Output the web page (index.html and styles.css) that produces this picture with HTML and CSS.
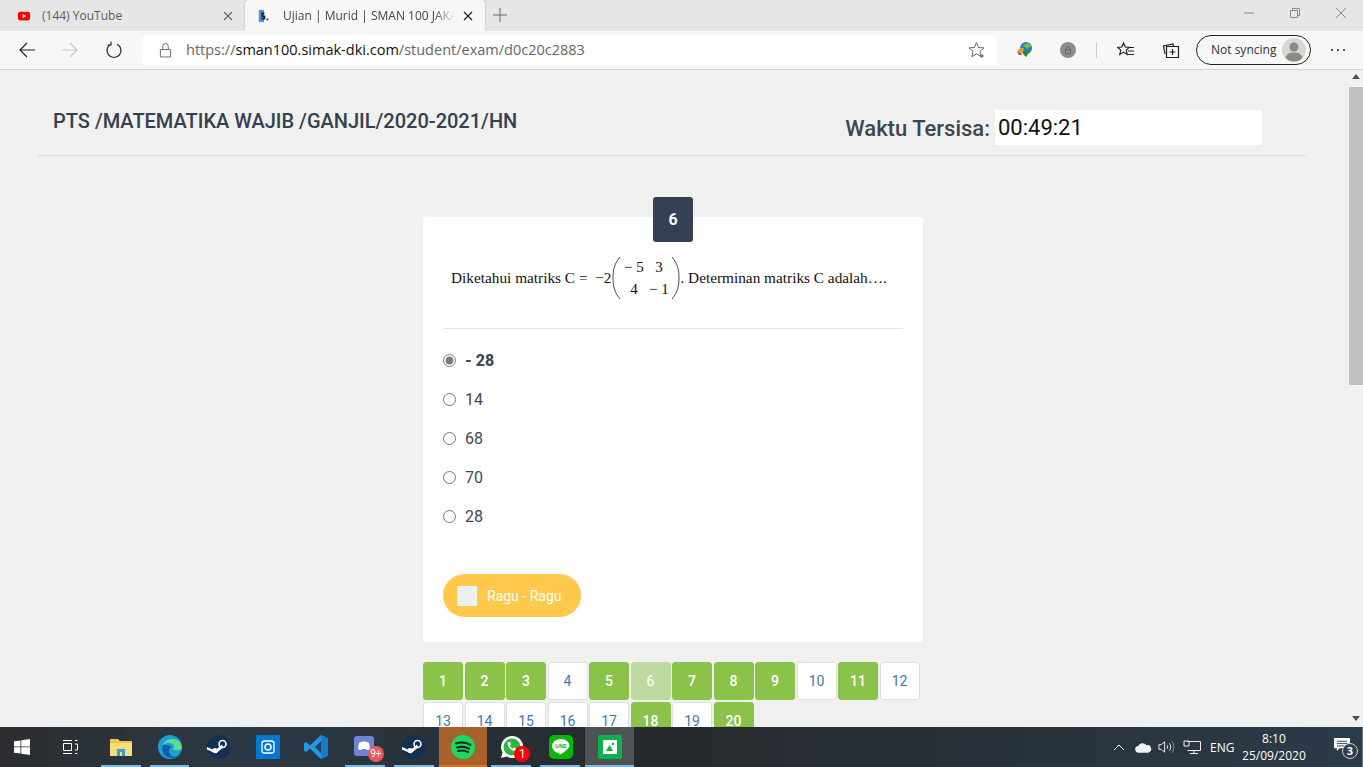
FILE: index.html
```html
<!DOCTYPE html>
<html lang="id">
<head>
<meta charset="utf-8">
<title>Ujian | Murid | SMAN 100 JAKARTA</title>
<link rel="stylesheet" href="styles.css">
</head>
<body>
<div class="tabstrip">
  <div class="tab">
    <svg class="fav" viewBox="0 0 16 16"><rect x="1" y="3" width="14" height="10" rx="3" fill="#f00"/><path d="M6.5 5.5v5l4-2.500z" fill="#fff"/></svg>
    <span class="tab-title">(144) YouTube</span>
    <svg class="tab-x" viewBox="0 0 10 10"><path d="M1 1l8 8M9 1l-8 8"/></svg>
  </div>
  <div class="tab tab-active">
    <svg class="fav" viewBox="0 0 16 16"><rect x="2" width="12" height="16" fill="#fff"/><rect x="2" y="1" width="6" height="14" fill="#4f94cd"/><path d="M5 4h3.500v2H7v1.500h2.500V12H5v-2h2.500V9H5z" fill="#123"/><rect x="11" y="11" width="2" height="2" fill="#222"/></svg>
    <span class="tab-title tab-fade">Ujian | Murid | SMAN 100 JAKARTA</span>
    <svg class="tab-x dark" viewBox="0 0 10 10"><path d="M1 1l8 8M9 1l-8 8"/></svg>
  </div>
  <svg class="newtab" viewBox="0 0 14 14"><path d="M7 0v14M0 7h14"/></svg>
  <div class="winctl">
    <svg viewBox="0 0 12 12"><path d="M1 6h10"/></svg>
    <svg viewBox="0 0 12 12"><path d="M1.500 3.500h7v7h-7zM3.500 3.500v-2h7v7h-2"/></svg>
    <svg viewBox="0 0 12 12"><path d="M1 1l10 10M11 1L1 11"/></svg>
  </div>
</div>

<div class="toolbar">
  <svg class="tool tool-back" viewBox="0 0 18 18"><path d="M17 9H2M9 2L2 9l7 7"/></svg>
  <svg class="tool tool-fwd" viewBox="0 0 18 18"><path d="M1 9h15M9 2l7 7-7 7"/></svg>
  <svg class="tool tool-reload" viewBox="0 0 18 18"><path d="M6 3.200A7 7 0 1 0 12 3.200M6 0.500v3.500H2.500"/></svg>
  <div class="address">
    <svg class="lock" viewBox="0 0 14 16"><path d="M1.500 7.500h11v8h-11zM4 7.500V4a3 3 0 0 1 6 0v3.500"/></svg>
    <span class="url"><span class="url-dim">https://</span>sman100.simak-dki.com<span class="url-dim">/student/exam/d0c20c2883</span></span>
    <svg class="star" viewBox="0 0 18 18"><path d="M8.500 1.500l2.100 5 5.400.4-4.100 3.500 1.200 5.300-4.600-2.800-4.600 2.800 1.200-5.300L1 6.900l5.400-.4z"/><path d="M14 13v4M12 15h4"/></svg>
  </div>
  <svg class="ext ext-idm" viewBox="0 0 18 18"><circle cx="10" cy="7" r="6" fill="#2d78c8"/><path d="M7 4l5-2 3 3-4 3z" fill="#7bbf3a"/><path d="M1 11c1-4 4-5 7-4l-1 4-2 1z" fill="#e8a020"/><path d="M1 11l4 1 1 2-3 0z" fill="#d63a2a"/><path d="M8 10h6l-4 6-3-3z" fill="#2a8a2a"/></svg>
  <svg class="ext ext-lock" viewBox="0 0 16 16"><circle cx="8" cy="8" r="8" fill="#8d8d8d"/><path d="M5.500 7.500h5v4h-5zM6.500 7.500V6a1.500 1.500 0 0 1 3 0v1.500" fill="none" stroke="#6a6a6a"/></svg>
  <span class="tool-sep"></span>
  <svg class="tool tool-favs" viewBox="0 0 18 18"><path d="M6.500 2l1.700 4 4.300.3-3.300 2.800 1 4.300-3.700-2.300-3.700 2.300 1-4.300L.500 6.300l4.300-.3z"/><path d="M11 6.500h6M11 10h6M11 13.500h6"/></svg>
  <svg class="tool tool-coll" viewBox="0 0 18 18"><path d="M3 13L1.500 5 11 3l.5 2.500"/><path d="M4.500 5.500h12v11h-12zM10.500 8v6M7.500 11h6"/></svg>
  <div class="sync">
    <span>Not syncing</span>
    <svg class="avatar" viewBox="0 0 24 24"><circle cx="12" cy="12" r="12" fill="#d9d7d2"/><circle cx="12" cy="9" r="4.500" fill="#8c8a86"/><path d="M3.500 20c1-4.500 4.500-5.500 8.500-5.500s7.500 1 8.500 5.500A12 12 0 0 1 3.500 20z" fill="#8c8a86"/></svg>
  </div>
  <div class="dots"><i></i><i></i><i></i></div>
</div>

<div class="viewport">
  <main class="page">
    <header class="exam-head">
      <h1 class="exam-title">PTS /MATEMATIKA WAJIB /GANJIL/2020-2021/HN</h1>
      <div class="timer">
        <span class="timer-label">Waktu Tersisa:</span>
        <output class="timer-value">00:49:21</output>
      </div>
    </header>
    <section class="exam">
      <div class="card">
        <div class="badge">6</div>
        <div class="question">
          <span>Diketahui matriks C =&nbsp; −2</span>
          <span class="matrix">
            <svg class="paren" viewBox="0 0 9 44"><path d="M8 1C2 8 1 15 1 22s1 14 7 21"/></svg>
            <span class="cells"><span>− 5</span><span>3</span><span>4</span><span>− 1</span></span>
            <svg class="paren" viewBox="0 0 9 44"><path d="M1 1c6 7 7 14 7 21s-1 14-7 21"/></svg>
          </span>
          <span>. Determinan matriks C adalah….</span>
        </div>
        <hr class="rule">
        <form class="answers">
          <label class="answer answer-on"><input type="radio" name="a" checked><span>- 28</span></label>
          <label class="answer"><input type="radio" name="a"><span>14</span></label>
          <label class="answer"><input type="radio" name="a"><span>68</span></label>
          <label class="answer"><input type="radio" name="a"><span>70</span></label>
          <label class="answer"><input type="radio" name="a"><span>28</span></label>
        </form>
        <div class="ragu"><span class="ragu-box"></span><span>Ragu - Ragu</span></div>
      </div>
      <nav class="numbers">
        <a class="num done">1</a><a class="num done">2</a><a class="num done">3</a><a class="num">4</a><a class="num done">5</a><a class="num now">6</a><a class="num done">7</a><a class="num done">8</a><a class="num done">9</a><a class="num">10</a><a class="num done">11</a><a class="num">12</a>
        <a class="num">13</a><a class="num">14</a><a class="num">15</a><a class="num">16</a><a class="num">17</a><a class="num done">18</a><a class="num">19</a><a class="num done">20</a>
      </nav>
    </section>
  </main>
  <div class="scrollbar">
    <svg class="arrow" viewBox="0 0 8 5"><path d="M4 0l4 5H0z"/></svg>
    <div class="track"><div class="thumb"></div></div>
    <svg class="arrow" viewBox="0 0 8 5"><path d="M0 0h8L4 5z"/></svg>
  </div>
</div>

<footer class="taskbar">
  <div class="tb-sys">
    <svg class="i-win" viewBox="0 0 16 16"><path d="M0 2.300L6.500 1.400v6.100H0zM7.300 1.300L16 0v7.500H7.300zM0 8.300h6.500v6.300L0 13.700zM7.300 8.300H16V16l-8.700-1.300z" fill="#fff"/></svg>
  </div>
  <div class="tb-sys tb-view">
    <svg class="i-view" viewBox="0 0 16 16"><path d="M1 1.500h9M1 14.500h9M1.500 4.500h8v7h-8zM13 1.500h2.500M13 5h2.500v6H13M13 14.500h2.500" fill="none" stroke="#fff"/></svg>
  </div>
  <div class="tb-app open"><svg viewBox="0 0 24 24"><path d="M1 4h8l2 2h12v15H1z" fill="#f2c14e"/><path d="M1 8h22v13H1z" fill="#fbdc7c"/><path d="M8 14h8v7H8z" fill="#3a9ad9"/><path d="M11 17h2v4h-2z" fill="#fbdc7c"/></svg></div>
  <div class="tb-app open"><svg viewBox="0 0 24 24"><circle cx="12" cy="12" r="12" fill="#1aa0d8"/><path d="M24 13c0-6-5-9-10-9-5 0-8 3-9 6 3-3 9-3 11 1 1 2-1 3-2 3 3 2 10 2 10-1z" fill="#5fdc8e"/><path d="M5 10c-3 7 3 14 10 13 2 0 4-1 5-2-5 2-9-1-9-5 0-2 1-3 3-4-3-2-7-2-9-2z" fill="#0c5fa8"/></svg></div>
  <div class="tb-app"><svg viewBox="0 0 24 24"><circle cx="12" cy="12" r="12" fill="#12304f"/><circle cx="15.500" cy="9" r="3.500" fill="none" stroke="#fff" stroke-width="1.600"/><circle cx="8" cy="15.500" r="2.500" fill="#fff"/><path d="M0 12l8 3.500 7-6 1 3-7 6-9-4z" fill="#fff"/></svg></div>
  <div class="tb-app"><svg viewBox="0 0 24 24"><rect width="24" height="24" fill="#0078d4"/><rect x="6" y="6" width="12" height="12" rx="2.500" fill="none" stroke="#fff" stroke-width="1.300"/><circle cx="12" cy="12" r="3" fill="none" stroke="#fff" stroke-width="1.500"/></svg></div>
  <div class="tb-app"><svg viewBox="0 0 24 24"><path d="M17 0l7 3.500v17L17 24 6 13.500 2 17l-2-1.500V8.500L2 7l4 3.500z" fill="#1f9ae4"/><path d="M17 6l-6 6 6 6z" fill="#2d3e50"/><path d="M17 0l7 3.500v17L17 24z" fill="#1280c8"/></svg></div>
  <div class="tb-app open"><svg viewBox="0 0 24 24"><rect x="1" y="1" width="20" height="20" rx="3" fill="#6c84d6"/><path d="M6 8c3-2 7-2 10 0l1 6c-1 1-2 1-3 1l-1-1H9l-1 1c-1 0-2 0-3-1z" fill="#fff"/></svg><span class="tb-badge soft">9+</span></div>
  <div class="tb-app open"><svg viewBox="0 0 24 24"><circle cx="12" cy="12" r="12" fill="#12304f"/><circle cx="15.500" cy="9" r="3.500" fill="none" stroke="#fff" stroke-width="1.600"/><circle cx="8" cy="15.500" r="2.500" fill="#fff"/><path d="M0 12l8 3.500 7-6 1 3-7 6-9-4z" fill="#fff"/></svg></div>
  <div class="tb-app tb-spotify"><svg viewBox="0 0 24 24"><circle cx="12" cy="12" r="12" fill="#1ed760"/><path d="M5 8.500c5-1.500 10-1 14.500 1.300M6 12.500c4-1.200 8.500-.8 12 1.200M7 16c3.500-1 7-.6 10 1" fill="none" stroke="#14261a" stroke-width="2" stroke-linecap="round"/></svg></div>
  <div class="tb-app open"><svg viewBox="0 0 24 24"><path d="M12 1a11 11 0 0 0-9.500 16.500L1 23l5.700-1.500A11 11 0 1 0 12 1z" fill="#fff"/><circle cx="12" cy="12" r="8.500" fill="#2bb741"/><path d="M8 7c-2 3 3 9 7 9 2 0 2-2 1-2.500l-2-1-1 1c-1 0-3-2-3-3l1-1-1-2.500z" fill="#fff"/></svg><span class="tb-badge">1</span></div>
  <div class="tb-app open"><svg viewBox="0 0 24 24"><rect width="24" height="24" rx="5" fill="#00b900"/><path d="M12 4c-5 0-9 3-9 7 0 3.500 3 6.500 7 7 1 .2.500 2 .5 2s5-2.500 8-6c1.500-1.500 2-2 2-3 0-4-4-7-8.500-7z" fill="#fff"/><text x="12" y="12.800" class="line-txt">LINE</text></svg></div>
  <div class="tb-app tb-active"><svg viewBox="0 0 24 24"><rect width="24" height="24" rx="2" fill="#0db14b"/><rect x="5" y="5" width="14" height="14" fill="#fff"/><path d="M8 16l3.500-6 3.500 6z" fill="#0db14b"/><rect x="14" y="8" width="2" height="2" fill="#0db14b"/></svg></div>
  <div class="tray">
    <svg class="t-chev" viewBox="0 0 12 7"><path d="M1 6l5-5 5 5"/></svg>
    <svg class="t-cloud" viewBox="0 0 18 11"><path d="M4 11a3.500 3.500 0 0 1-.5-7A5 5 0 0 1 12 3a4 4 0 0 1 2 8z" fill="#f2f2f2"/></svg>
    <svg class="t-vol" viewBox="0 0 18 14"><path d="M1 4.500h2.500L7 1.500v11l-3.500-3H1zM9.500 5c1 1 1 3 0 4M12 3c2 2 2 6 0 8"/><path d="M14.500 1c3 3 3 9 0 12" opacity=".5"/></svg>
    <svg class="t-net" viewBox="0 0 18 15"><path d="M4.500 1.500h13v9h-13M11 10.500v3M7 13.500h8M1 1h5v5H1z"/></svg>
    <span class="t-lang">ENG</span>
    <div class="t-clock"><span>8:10</span><span>25/09/2020</span></div>
    <div class="t-note">
      <svg viewBox="0 0 17 15"><path d="M0 0h17v11H6l-3 3v-3H0z" fill="#fff"/><path d="M3 3.500h11M3 6h11M3 8.500h8" stroke="#2f3e4e"/></svg>
      <span class="t-count">3</span>
    </div>
    <span class="t-peek"></span>
  </div>
</footer>
</body>
</html>
```
FILE: styles.css
```css
* { box-sizing: border-box; }
html, body { height: 100%; }
body {
  margin: 0;
  width: 1363px;
  height: 767px;
  overflow: hidden;
  display: flex;
  flex-direction: column;
  font-family: Roboto, "Liberation Sans", sans-serif;
  background: #f0f0f0;
}
svg { display: block; flex: none; }

/* Browser tabs */
.tabstrip {
  height: 31px;
  flex: none;
  display: flex;
  align-items: stretch;
  background: #e6e6e6;
}
.tab {
  width: 245px;
  display: flex;
  align-items: center;
  padding: 0 12px 0 17px;
  font: 12px "Open Sans", "Liberation Sans", sans-serif;
  color: #5c5c5c;
}
.tab-active {
  width: 240px;
  padding: 0 12px 0 12px;
  background: #f7f7f7;
  border-radius: 4px 4px 0 0;
  box-shadow: 0 0 2px rgba(0, 0, 0, .25);
  color: #444;
}
.fav { width: 14px; height: 14px; margin-right: 11px; }
.tab-active .fav { margin-right: 12px; }
.tab-title { flex: 1; min-width: 0; white-space: nowrap; overflow: hidden; }
.tab-fade { -webkit-mask-image: linear-gradient(90deg, #000 88%, transparent); mask-image: linear-gradient(90deg, #000 88%, transparent); }
.tab-x { width: 10px; height: 10px; margin-left: 8px; fill: none; stroke: #666; stroke-width: 1.200; }
.tab-x.dark { stroke: #222; }
.newtab { width: 14px; height: 14px; margin: 8px 0 0 8px; fill: none; stroke: #666; }
.winctl { margin-left: auto; display: flex; gap: 34px; padding: 7px 16px 0 0; }
.winctl svg { width: 12px; height: 12px; fill: none; stroke: #8a8a8a; }

/* Browser toolbar */
.toolbar {
  height: 39px;
  flex: none;
  display: flex;
  align-items: center;
  padding: 0 0 1px 0;
  background: #f7f7f7;
  border-bottom: 1px solid #d6d6d6;
}
.tool { width: 18px; height: 18px; fill: none; stroke: #222; stroke-width: 1.200; }
.tool-back { margin-left: 18px; }
.tool-fwd { margin-left: 25px; stroke: #c8c8c8; }
.tool-reload { margin-left: 26px; }
.address {
  width: 855px;
  height: 30px;
  margin-left: 19px;
  display: flex;
  align-items: center;
  padding: 0 11px 0 17px;
  background: #fff;
  border-radius: 4px;
}
.lock { width: 13px; height: 16px; fill: none; stroke: #666; margin-right: 14px; }
.url { flex: 1; font: 14.500px "Open Sans", "Liberation Sans", sans-serif; color: #111; white-space: nowrap; }
.url-dim { color: #666; }
.star { width: 18px; height: 18px; fill: none; stroke: #666; }
.ext { width: 18px; height: 18px; }
.ext-idm { margin-left: 19px; }
.ext-lock { margin-left: 26px; width: 16px; height: 16px; }
.tool-sep { width: 1px; height: 16px; background: #ccc; margin-left: 20px; }
.tool-favs { margin-left: 20px; }
.tool-coll { margin-left: 27px; }
.sync {
  width: 115px;
  height: 30px;
  margin-left: 16px;
  display: flex;
  align-items: center;
  justify-content: space-between;
  padding: 0 4px 0 14px;
  border: 1px solid #222;
  border-radius: 15px;
  font: 12px "Open Sans", "Liberation Sans", sans-serif;
  color: #333;
}
.avatar { width: 24px; height: 24px; }
.dots { display: flex; gap: 4px; margin-left: 20px; }
.dots i { width: 2px; height: 2px; background: #222; border-radius: 50%; }

/* Page viewport */
.viewport { flex: 1; min-height: 0; display: flex; overflow: hidden; }
.page { flex: 1; min-width: 0; overflow: hidden; }
.scrollbar { width: 14px; flex: none; display: flex; flex-direction: column; align-items: center; background: #f1f1f1; padding: 4px 0 6px; }
.arrow { width: 8px; height: 5px; fill: #505050; }
.track { flex: 1; width: 100%; padding-top: 8px; }
.thumb { height: 298px; background: #c1c1c1; }

.exam-head {
  height: 86px;
  margin: 0 42px 0 38px;
  padding: 0 45px 0 15px;
  display: flex;
  justify-content: space-between;
  border-bottom: 1px solid #dcdcdc;
}
.exam-title { margin: 39px 0 0; font-size: 20px; font-weight: 500; line-height: 24px; color: #353f4f; }
.timer { display: flex; gap: 5px; margin-top: 40px; height: 35px; }
.timer-label { font-size: 22px; font-weight: 500; line-height: 35px; color: #3b4554; margin-top: 0; padding-top: 1px; }
.timer-value {
  width: 267px;
  padding-left: 3px;
  background: #fff;
  font-size: 22px;
  line-height: 35px;
  color: #111;
}

.exam { width: 503px; margin: 61px auto 0; padding-right: 3px; }
.card {
  position: relative;
  height: 425px;
  padding: 0 20px;
  background: #fff;
  border-radius: 2px;
}
.badge {
  position: absolute;
  top: -20px;
  left: 230px;
  width: 40px;
  height: 45px;
  display: flex;
  align-items: center;
  justify-content: center;
  background: #344154;
  border-radius: 3px;
  color: #fff;
  font-size: 16px;
  font-weight: 700;
}
.question {
  height: 111px;
  padding: 39px 0 0 8px;
  display: flex;
  align-items: flex-start;
  font: 15.300px "Liberation Serif", "Times New Roman", serif;
  line-height: 44px;
  color: #111;
  white-space: pre;
}
.matrix { display: inline-flex; align-items: stretch; height: 44px; margin-left: 1px; }
.paren { width: 9px; height: 44px; fill: none; stroke: #4a4a4a; stroke-width: 1; }
.cells {
  width: 50px;
  display: grid;
  grid-template-columns: 1fr 1fr;
  line-height: 22px;
  font-size: 15px;
  text-align: center;
}
.rule { margin: 0; border: 0; border-top: 1px solid #e4e4e4; }

.answers { padding-top: 12px; display: flex; flex-direction: column; }
.answer {
  height: 39px;
  display: flex;
  align-items: center;
  gap: 9px;
  font-size: 16px;
  color: #3f4658;
}
.answer input { width: 13px; height: 13px; margin: 0; accent-color: #7a7a7a; }
.answer-on { font-weight: 800; }

.ragu {
  width: 138px;
  height: 43px;
  margin-top: 38px;
  display: flex;
  align-items: center;
  gap: 10px;
  padding-left: 14px;
  background: #ffc94b;
  border-radius: 22px;
  color: #fff;
  font-size: 14px;
}
.ragu-box { width: 20px; height: 20px; background: #efefef; }

.numbers {
  width: 500px;
  margin-top: 20px;
  display: flex;
  flex-wrap: wrap;
  gap: 2px 1.500px;
}
.num {
  width: 40px;
  height: 38px;
  display: flex;
  align-items: center;
  justify-content: center;
  background: #fff;
  border: 1px solid #e0e0e0;
  border-radius: 3px;
  color: #3d78b0;
  font-size: 14px;
}
.num.done { background: #8bc34a; border-color: #8bc34a; color: #fff; font-weight: 500; }
.num.now { background: #bfdaa0; border-color: #bfdaa0; color: #fff; }

/* Windows taskbar */
.taskbar {
  height: 40px;
  flex: none;
  display: flex;
  align-items: stretch;
  background: linear-gradient(90deg, #2b2d30 0, #2c3a46 18%, #25292c 48%, #2c3b49 100%);
}
.tb-sys { width: 44px; display: flex; align-items: center; justify-content: center; }
.tb-view { width: 53px; }
.i-win { width: 16px; height: 16px; }
.i-view { width: 16px; height: 16px; }
.tb-app { position: relative; width: 49px; display: flex; align-items: center; justify-content: center; }
.tb-app svg { width: 24px; height: 24px; }
.tb-app.open::after {
  content: "";
  position: absolute;
  left: 4px;
  right: 5px;
  bottom: 0;
  height: 2px;
  background: #76b9ed;
}
.tb-spotify { background: #a7622c; box-shadow: inset 0 -2px #e0701a; }
.tb-active { background: #505356; box-shadow: inset 0 -2px #76b9ed; }
.tb-badge {
  position: absolute;
  left: 27px;
  top: 19px;
  width: 16px;
  height: 16px;
  border-radius: 50%;
  background: #f00;
  color: #fff;
  font-size: 12px;
  line-height: 16px;
  text-align: center;
}
.tb-badge.soft { background: #e8575a; font-size: 10px; }
.line-txt { font: 700 5px "Liberation Sans", sans-serif; fill: #00b900; text-anchor: middle; }
.tray { flex: 1; display: flex; align-items: center; color: #fff; font: 12px "Open Sans", "Liberation Sans", sans-serif; padding-left: 479px; }
.t-chev { width: 12px; height: 7px; fill: none; stroke: #fff; }
.t-cloud { width: 17px; height: 11px; margin-left: 10px; }
.t-vol { width: 17px; height: 14px; margin-left: 6px; fill: none; stroke: #f0f0f0; }
.t-net { width: 18px; height: 15px; margin-left: 8px; fill: none; stroke: #f0f0f0; }
.t-lang { margin-left: 9px; width: 24px; }
.t-clock { width: 70px; margin-left: 5px; display: flex; flex-direction: column; align-items: center; gap: 1px; line-height: 16px; }
.t-note { position: relative; margin-left: 25px; width: 24px; height: 24px; padding-top: 3px; }
.t-note svg { width: 16px; height: 14px; }
.t-count {
  position: absolute;
  left: 8px;
  top: 8px;
  width: 16px;
  height: 16px;
  border: 1px solid #ccc;
  border-radius: 50%;
  background: #2f3e4e;
  font-size: 11px;
  font-weight: 700;
  line-height: 14px;
  text-align: center;
}
.t-peek { width: 1px; height: 100%; margin-left: 4px; background: #6d7a86; }
```
